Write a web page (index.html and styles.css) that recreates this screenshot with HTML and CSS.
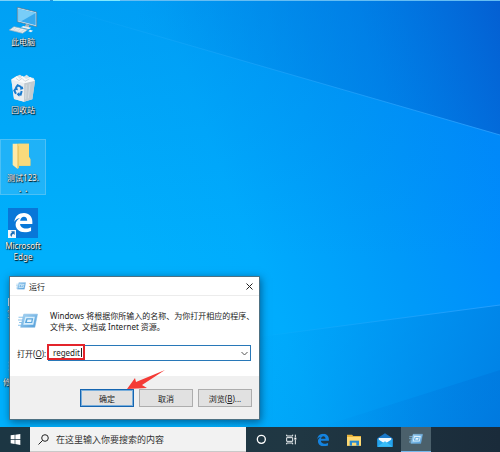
FILE: index.html
```html
<!DOCTYPE html>
<html lang="zh-CN">
<head>
<meta charset="utf-8">
<title>运行</title>
<link rel="stylesheet" href="styles.css">
</head>
<body>
<svg class="defs" width="0" height="0" aria-hidden="true">
  <defs>
    <linearGradient id="runFill" x1="0" y1="0" x2="1" y2="1">
      <stop offset="0" stop-color="#a9d6f4"/><stop offset="1" stop-color="#4f9bd8"/>
    </linearGradient>
    <symbol id="run" viewBox="0 0 38 30">
      <path d="M1 8h9M0 13h9M2 18h7M0 23h8" stroke="#8cc4ea" stroke-width="2"/>
      <path d="M11 2h26l-5 25H5z" fill="url(#runFill)" stroke="#74b2e0"/>
      <path d="M14 7h18l-3 15H10z" fill="#d9effc"/>
      <path d="M16 10h13l-2 9H13z" fill="#5ba6dd"/>
      <path d="M18 12h8l-1 5h-8z" fill="#e6f5fe"/>
    </symbol>
    <symbol id="edge" viewBox="0 0 30 30">
      <path d="M1 14C2 5 8 0 16 0c8 0 13 6 13 13v4H10c0 4 4 7 9 7 3 0 6-1 8-2v6c-3 1-6 2-10 2C9 30 3 25 3 18c0-5 3-8 7-10-5 0-8 3-9 6zm9-2h11c0-4-2-6-5-6s-5 2-6 6z"/>
    </symbol>
  </defs>
</svg>

<main class="desktop">
  <svg class="wallpaper" viewBox="0 0 500 427" preserveAspectRatio="none" aria-hidden="true">
    <defs>
      <linearGradient id="sky" gradientUnits="userSpaceOnUse" x1="150" y1="300" x2="500" y2="165">
        <stop offset="0" stop-color="#00b0fc"/><stop offset=".3" stop-color="#00acfd"/>
        <stop offset=".65" stop-color="#009af9"/><stop offset="1" stop-color="#0089fc"/>
      </linearGradient>
      <linearGradient id="skyTop" x1="0" y1="0" x2="0" y2="1">
        <stop offset="0" stop-color="#0088e8" stop-opacity=".4"/><stop offset=".6" stop-color="#0088e8" stop-opacity="0"/>
      </linearGradient>
      <linearGradient id="upper" gradientUnits="userSpaceOnUse" x1="170" y1="110" x2="500" y2="0">
        <stop offset="0" stop-color="#0084e0" stop-opacity="0"/><stop offset=".6" stop-color="#0076de" stop-opacity=".6"/>
        <stop offset="1" stop-color="#045fd2"/>
      </linearGradient>
      <linearGradient id="lower" gradientUnits="userSpaceOnUse" x1="250" y1="330" x2="500" y2="427">
        <stop offset="0" stop-color="#009cf0" stop-opacity="0"/><stop offset="1" stop-color="#0080e4"/>
      </linearGradient>
      <linearGradient id="corner" x1="0" y1="0" x2="1" y2="0">
        <stop offset="0" stop-color="#0070d8" stop-opacity="0"/><stop offset="1" stop-color="#0070d8" stop-opacity=".4"/>
      </linearGradient>
      <linearGradient id="ray" x1="0" y1="0" x2="1" y2="0">
        <stop offset="0" stop-color="#38b8ff" stop-opacity="0"/><stop offset="1" stop-color="#2ea2ff" stop-opacity=".8"/>
      </linearGradient>
    </defs>
    <path d="M0 0h500v427H0z" fill="url(#sky)"/>
    <path d="M0 0h500v427H0z" fill="url(#skyTop)"/>
    <path d="M50 5V0h450v135z" fill="url(#upper)"/>
    <path d="M258 337l242-32v122H200z" fill="url(#lower)"/>
    <path d="M320 427l180-57v57z" fill="url(#corner)"/>
    <path d="M50 5l450 130" stroke="url(#ray)"/>
    <path d="M258 337l242-32" stroke="url(#ray)"/>
  </svg>
  <div class="top-edge"></div>

  <nav class="shortcuts" aria-label="桌面">
    <a class="shortcut" href="#">
      <svg class="shortcut-icon" viewBox="0 0 90 90" aria-hidden="true">
        <path d="M28 10l58 14v44L28 53z" fill="#dcecf5" stroke="#486f89" stroke-width="2"/>
        <path d="M31 14l52 13v37L31 50z" fill="#36a9ee"/>
        <path d="M31 14l52 13-43 25-9-2z" fill="#78cdf8"/>
        <path d="M54 60l10 3-2 8-12-3z" fill="#a5b5bf"/>
        <path d="M46 66l24 5-7 5-25-6z" fill="#e8eef1"/>
        <path d="M18 68l41 9-15 11-40-10z" fill="#eef3f5" stroke="#9eb2bd" stroke-width="2"/>
        <path d="M14 73l37 8M10 77l37 8M26 71l-11 9M38 74l-11 9M49 77l-11 9" stroke="#aebfc9" stroke-width="1"/>
        <path d="M66 77l9 3-6 5-8-3z" fill="#eef3f5"/>
      </svg>
      <span>此电脑</span>
    </a>
    <a class="shortcut" href="#">
      <svg class="shortcut-icon" viewBox="0 0 90 90" aria-hidden="true">
        <path d="M10 22l15-9 11-5 10 7 10-7 9 8 12 2 4 10-8 54-25 7-30-8z" fill="#dbe1e5"/>
        <path d="M10 23l39 10-1 56-30-8z" fill="#e9eef1"/>
        <path d="M49 33l32-7-8 56-25 7z" fill="#c2cbd1"/>
        <path d="M10 23l17-11 9 9 8-10 10 10 13-6 14 11-32 8z" fill="#f8fafb"/>
        <path d="M24 19l9 7 9-7 9 9 13-7" fill="none" stroke="#bdc7cd" stroke-width="2"/>
        <path d="M55 38l-2 44M66 35l-5 44" stroke="#d6dde1" stroke-width="3"/>
        <path d="M23 48l6-8 9 4 3 7M41 57l-3 11-8-1M24 65l-5-9 5-7" fill="none" stroke="#1779cd" stroke-width="6"/>
        <path d="M36 53l10-2-2-8zM34 60l-8 7 8 7zM18 53l9-7 3 9z" fill="#1779cd"/>
      </svg>
      <span>回收站</span>
    </a>
    <a class="shortcut shortcut-selected" href="#">
      <svg class="shortcut-icon" viewBox="0 0 90 90" aria-hidden="true">
        <path d="M26 11h37v40l4 6v20H26z" fill="#f2ce63"/>
        <path d="M31 11h32v40l4 6v20H31z" fill="#f8da7c"/>
        <path d="M14 11h13l6 7v65l-5 3-14-11z" fill="#ffe9a6"/>
        <path d="M27 11l6 7v65l-5 3V18z" fill="#eac765"/>
      </svg>
      <span>测试123.<br><b class="dots">. &nbsp;.</b></span>
    </a>
    <a class="shortcut" href="#">
      <svg class="shortcut-icon" viewBox="0 0 90 90" aria-hidden="true">
        <path d="M0 0h90v90H0z" fill="#0877d8"/>
        <use href="#edge" x="17" y="14" width="58" height="60" fill="#fff"/>
        <path d="M0 66h24v24H0z" fill="#f2f6fa"/>
        <path d="M9 70h11v11l-4-4c-4 2-5 6-5 10-6-5-4-11 1-14z" fill="#176bb8"/>
      </svg>
      <span>Microsoft<br>Edge</span>
    </a>
    <a class="shortcut" href="#">
      <svg class="shortcut-icon" viewBox="0 0 90 90" aria-hidden="true"><path d="M0 66h24v24H0z" fill="#dbe6ef"/></svg>
      <span>宽带连接</span>
    </a>
    <a class="shortcut" href="#">
      <svg class="shortcut-icon" viewBox="0 0 90 90" aria-hidden="true"><path d="M2 50h20v36H2z" fill="#3ca4dc"/><path d="M2 55h16M2 66h16M2 77h16" stroke="#96d5f5" stroke-width="3"/></svg>
      <span>修复工具箱</span>
    </a>
  </nav>

  <section class="dialog" role="dialog" aria-labelledby="dialog-title">
    <header class="titlebar">
      <svg class="title-icon" aria-hidden="true"><use href="#run"/></svg>
      <h1 id="dialog-title">运行</h1>
      <button class="close" type="button" aria-label="关闭">
        <svg viewBox="0 0 7 7" aria-hidden="true"><path d="M.5.5l6 6m0-6l-6 6" stroke="#222"/></svg>
      </button>
    </header>
    <form>
      <div class="content">
        <div class="message">
          <svg class="message-icon" aria-hidden="true"><use href="#run"/></svg>
          <p>Windows 将根据你所输入的名称、为你打开相应的程序、<br>文件夹、文档或 Internet 资源。</p>
        </div>
        <div class="field">
          <label for="command">打开(<u>O</u>):</label>
          <div class="combo">
            <input id="command" type="text" value="regedit">
            <button type="button" aria-label="展开">
              <svg viewBox="0 0 7 5" aria-hidden="true"><path d="M.5 1l3 3 3-3" fill="none" stroke="#555"/></svg>
            </button>
            <span class="caret"></span>
            <span class="highlight"></span>
          </div>
        </div>
      </div>
      <footer class="actions">
        <button class="primary" type="button">确定</button>
        <button type="button">取消</button>
        <button type="button">浏览(<u>B</u>)...</button>
        <svg class="pointer" viewBox="0 0 38 20" aria-hidden="true"><path d="M0 19L8 8l1 4L38 0 15 15l5 3z" fill="#f43b36"/></svg>
      </footer>
    </form>
  </section>
</main>

<footer class="taskbar">
  <button class="task" type="button" aria-label="开始">
    <svg class="task-icon" viewBox="0 0 33 33" aria-hidden="true"><path d="M2 4l12-2v13H2zM16 2l15-2v15H16zM2 17h12v13L2 28zM16 17h15v16l-15-3z" fill="#fff"/></svg>
  </button>
  <div class="search">
    <svg viewBox="0 0 11 11" aria-hidden="true"><circle cx="7" cy="4" r="3.3" fill="none" stroke="#222"/><path d="M4.6 6.4L.5 10.5" stroke="#222"/></svg>
    <input type="text" placeholder="在这里输入你要搜索的内容" aria-label="搜索">
  </div>
  <button class="task" type="button" aria-label="Cortana">
    <svg class="task-icon" viewBox="0 0 33 33" aria-hidden="true"><circle cx="16" cy="16" r="12" fill="none" stroke="#fff" stroke-width="4"/></svg>
  </button>
  <button class="task" type="button" aria-label="任务视图">
    <svg class="task-icon" viewBox="0 0 33 33" aria-hidden="true"><path d="M2 2v4h18V2M2 31v-4h18v4M2 11h18v11H2zM28 2v8M28 18v13" fill="none" stroke="#eef2f4" stroke-width="3"/><path d="M25 11h6v6h-6z" fill="#fff"/></svg>
  </button>
  <div class="apps">
    <button class="task" type="button" aria-label="Microsoft Edge">
      <svg class="app-icon" viewBox="0 0 42 42" aria-hidden="true"><use href="#edge" x="2" y="2" width="38" height="38" fill="#1483df"/></svg>
    </button>
    <button class="task" type="button" aria-label="文件资源管理器">
      <svg class="app-icon" viewBox="0 0 42 42" aria-hidden="true"><path d="M0 5h15l4 4h23v29H0z" fill="#e9b43c"/><path d="M0 12h42v26H0z" fill="#ffda72"/><path d="M8 23h28v15H8z" fill="#2789cf"/><path d="M15 29h13v9H15z" fill="#ffda72"/></svg>
    </button>
    <button class="task" type="button" aria-label="邮件">
      <svg class="app-icon app-icon-wide" viewBox="0 0 48 42" aria-hidden="true"><path d="M1 16L24 1l23 15v25H1z" fill="#1b78c7"/><path d="M5 15h38v20H5z" fill="#f3f9fd"/><path d="M1 17l23 15 23-15v24H1z" fill="#24a3ec"/><path d="M1 41l23-16 23 16z" fill="#39bdf7"/></svg>
    </button>
    <button class="task task-active" type="button" aria-label="运行">
      <svg class="app-icon" aria-hidden="true"><use href="#run"/></svg>
    </button>
  </div>
</footer>
</body>
</html>
```
FILE: styles.css
```css
* {
  box-sizing: border-box;
}

body {
  display: flex;
  flex-direction: column;
  min-height: 100vh;
  margin: 0;
  font: 8px/11px "Noto Sans", "Noto Sans CJK SC", sans-serif;
  color: #222;
}

button,
input {
  margin: 0;
  padding: 0;
  border: 0;
  border-radius: 0;
  background: none;
  font: inherit;
  color: inherit;
}

svg {
  display: block;
}

.defs {
  position: absolute;
}

.desktop {
  position: relative;
  flex: 1;
  overflow: hidden;
}

.wallpaper {
  position: absolute;
  inset: 0;
  width: 100%;
  height: 100%;
}

.top-edge {
  position: absolute;
  inset: 0 0 auto;
  height: 1px;
  background: linear-gradient(90deg, #7cd0f8 50px, #2795dc 50px 53px, #80eaff 53px 120px, #65bdf3 120px);
}

/* Desktop shortcuts */
.shortcuts {
  position: relative;
  display: grid;
  grid-auto-rows: 56px;
  gap: 12px;
  width: 46px;
  padding-top: 3px;
}

.shortcut {
  display: flex;
  flex-direction: column;
  align-items: center;
  gap: 2px;
  color: #fff;
  text-align: center;
  text-decoration: none;
  text-shadow: 0 0 1px #000, 1px 1px 1px #000;
  white-space: nowrap;
}

.shortcut-selected {
  background: rgba(90, 195, 245, 0.35);
  outline: 1px solid #4cc0f5;
  outline-offset: -1px;
}

.dots {
  font-weight: 700;
}

.shortcut-icon {
  flex: none;
  width: 30px;
  height: 30px;
  margin-top: 1px;
}

/* Run dialog */
.dialog {
  position: absolute;
  left: 9px;
  bottom: 7px;
  width: 251px;
  border: 1px solid #4d7183;
  background: #fff;
  box-shadow: 1px 2px 8px rgba(0, 30, 60, 0.55);
}

.titlebar {
  display: flex;
  align-items: center;
  gap: 3px;
  height: 19px;
  padding: 0 6px;
  border-bottom: 1px solid #ececec;
}

.titlebar h1 {
  flex: 1;
  margin: 0;
  font: inherit;
}

.title-icon {
  width: 10px;
  height: 8px;
}

.close svg {
  width: 7px;
  height: 7px;
}

.content {
  display: grid;
  grid-template-columns: minmax(0, 1fr);
  gap: 13px;
  padding: 14px 8px 15px 7px;
}

.message {
  display: flex;
  align-items: center;
  gap: 12px;
  padding-left: 1px;
  white-space: nowrap;
}

.message-icon {
  flex: none;
  width: 20px;
  height: 16px;
}

.message p {
  margin: 0;
}

.field {
  display: flex;
  align-items: center;
}

.field label {
  width: 31px;
  white-space: nowrap;
}

.combo {
  position: relative;
  display: flex;
  flex: 1;
  height: 16px;
  border: 1px solid #2878b8;
}

.combo input {
  flex: 1;
  min-width: 0;
  padding: 0 0 2px 4px;
  outline: 0;
}

.combo button {
  padding: 0 2px;
}

.combo button svg {
  width: 7px;
  height: 5px;
}

.caret {
  position: absolute;
  top: 2px;
  left: 32px;
  width: 1px;
  height: 9px;
  background: #222;
}

.highlight {
  position: absolute;
  top: -2px;
  left: -2px;
  width: 38px;
  height: 16px;
  border: 2px solid #e3242b;
}

.actions {
  position: relative;
  display: flex;
  justify-content: flex-end;
  gap: 5px;
  padding: 13px 7px 12px;
  background: #f0f0f0;
}

.actions button {
  width: 54px;
  height: 18px;
  border: 1px solid #adadad;
  background: #e1e1e1;
}

.actions .primary {
  border-color: #1565b0;
  box-shadow: inset 0 0 0 1px #79aedb;
}

.pointer {
  position: absolute;
  right: 94px;
  bottom: 29px;
  width: 38px;
  height: 20px;
}

/* Taskbar */
.taskbar {
  display: flex;
  height: 25px;
  background: linear-gradient(90deg, #1c3643, #203743 60%, #1a2b3a);
}

.task {
  display: grid;
  place-items: center;
  width: 30px;
}

.task-icon {
  width: 11px;
  height: 11px;
}

.search {
  display: flex;
  align-items: center;
  gap: 7px;
  width: 216px;
  padding: 0 8px;
  border-bottom: 1px solid #c9c9c9;
  background: #f2f2f2;
}

.search svg {
  width: 11px;
  height: 11px;
}

.search input {
  flex: 1;
  min-width: 0;
  font-size: 9px;
}

.search input::placeholder {
  color: #333;
}

.apps {
  display: flex;
  gap: 1px;
  margin-left: 2px;
}

.app-icon {
  width: 14px;
  height: 14px;
}

.app-icon-wide {
  width: 16px;
}

.task-active {
  border-bottom: 1px solid #76b9ed;
  background: #4b606b;
}
```
